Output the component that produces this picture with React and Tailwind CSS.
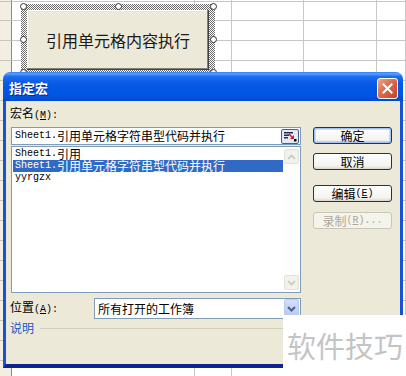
import React from "react";

const cjk = "font-['Noto_Sans_CJK_SC',sans-serif]";
const lat = "font-['Liberation_Mono','Noto_Sans_CJK_SC',monospace] text-[10px]";

const cols = ["w-[183px]", "w-[37px]", "w-[72px]", "w-[73px]", "flex-1"];
const rows = ["h-[2px]", "h-[19px]", ...Array(18).fill("h-[20px]")];

const Sheet = () => (
    <div className="flex flex-col">
        {rows.map((h, i) => (
            <div key={i} className={`flex shrink-0 ${h}`}>
                <div className="w-[12px] shrink-0 bg-[#f1efe2] border-r border-b border-r-[#8e8b7c] border-b-[#cac6b5]" />
                {cols.map((c, j) => (
                    <div key={j} className={`${c} shrink-0 border-r border-b border-[#c6c6c6]`} />
                ))}
            </div>
        ))}
    </div>
);

const Handle = ({ className }) => (
    <div className={`absolute w-[7px] h-[7px] rounded-full bg-white border border-[#333] ${className}`} />
);

const SheetButton = () => (
    <div className="absolute left-[21px] top-[4px] w-[194px] h-[72px] p-[6px] bg-[repeating-conic-gradient(#6b6b6b_0_25%,#ffffff_0_50%)] bg-[length:2px_2px]">
        <div className={`h-full flex items-center justify-center bg-[#ece9d8] shadow-[inset_-1px_-1px_0_#404040,inset_-2px_-2px_0_#808080,inset_1px_1px_0_#ffffff] text-[16px] text-[#1a1a1a] ${cjk}`}>
            引用单元格内容执行
        </div>
        <Handle className="left-[-1px] top-[-1px]" />
        <Handle className="left-[94px] top-[-1px]" />
        <Handle className="left-[189px] top-[-1px]" />
        <Handle className="left-[-1px] top-[32px]" />
        <Handle className="left-[189px] top-[32px]" />
        <Handle className="left-[-1px] top-[65px]" />
        <Handle className="left-[189px] top-[65px]" />
    </div>
);

const CloseButton = () => (
    <div className="w-[21px] h-[21px] rounded-[3px] border border-white bg-[linear-gradient(135deg,#f0a58c_0%,#e0704f_40%,#c8401f_100%)] flex items-center justify-center">
        <svg width="11" height="11" viewBox="0 0 11 11">
            <path d="M1.5 1.5 L9.5 9.5 M9.5 1.5 L1.5 9.5" stroke="#fff" strokeWidth="2" strokeLinecap="square" />
        </svg>
    </div>
);

const RefIcon = () => (
    <svg width="18" height="15" viewBox="0 0 18 15" className="absolute right-px top-[1px]">
        <rect x="0.5" y="0.5" width="17" height="14" rx="1.5" fill="#e4eaf4" stroke="#4b5d86" />
        <rect x="3" y="3" width="9" height="1.5" fill="#1d2b5e" />
        <rect x="3" y="5.5" width="5" height="1.5" fill="#1d2b5e" />
        <rect x="3" y="8" width="4" height="1.5" fill="#1d2b5e" />
        <path d="M8 5 L12 9" stroke="#d21f1f" strokeWidth="1.6" />
        <path d="M9 10 L13 10 L13 6 Z" fill="#d21f1f" />
        <rect x="13" y="10" width="2.5" height="2.5" fill="#000" />
    </svg>
);

const XPButton = ({ children, def, disabled, className = "" }) => (
    <div
        className={`h-[17px] w-[79px] rounded-[3px] border flex items-center justify-center text-[12px] leading-none ${className} ${
            disabled
                ? "border-[#c9c7ba] bg-[#f5f4ea] text-[#aca899]"
                : "border-[#003c74] bg-[linear-gradient(to_bottom,#ffffff,#f3f3ee_80%,#d9d4c9)] text-black"
        } ${def ? "shadow-[inset_0_0_0_1.5px_#a4c0ef]" : ""}`}
    >
        {children}
    </div>
);

const ScrollArrow = ({ up }) => (
    <div className="h-[15px] rounded-[2px] bg-[#f2f2ed] border border-[#e3e2da] flex items-center justify-center">
        <svg width="9" height="6" viewBox="0 0 9 6">
            <path d={up ? "M1 5 L4.5 1.5 L8 5" : "M1 1 L4.5 4.5 L8 1"} stroke="#c9c7ba" strokeWidth="1.6" fill="none" />
        </svg>
    </div>
);

const Dialog = () => (
    <div className={`absolute left-[3px] top-[72px] w-[400px] h-[296px] flex flex-col rounded-t-[7px] overflow-hidden ${cjk}`}>
        <div className="h-[29px] shrink-0 flex items-start justify-between pl-[6px] pr-[5px] bg-[linear-gradient(to_bottom,#2d7cf6_0%,#5aa0fd_6%,#1d6cf0_16%,#0759e6_40%,#0055e3_80%,#0049cc_100%)]">
            <span className="mt-[8px] text-[13px] leading-[16px] font-bold text-white [text-shadow:1px_1px_0_#0a2a8a]">指定宏</span>
            <div className="mt-[6px]"><CloseButton /></div>
        </div>
        <div className="flex-1 flex bg-[#ece9d8] border-x-[3px] border-b-[4px] border-x-[#1a52d6] border-b-[#0c2690] text-[12px] text-black">
            <div className="ml-[5px] w-[290px] flex flex-col">
                <div className="mt-[6px] -ml-px leading-[12px]">
                    宏名<span className={lat}>(<span className="underline">M</span>):</span>
                </div>
                <div className="mt-[5px] h-[18px] relative border border-[#7f9db9] bg-white flex items-center pl-[3px] leading-[12px]">
                    <span className={lat}>Sheet1.</span>引用单元格字符串型代码并执行
                    <RefIcon />
                </div>
                <div className="mt-px h-[147px] flex border border-[#7f9db9] bg-white">
                    <div className="flex-1 flex flex-col pt-px leading-[12px]">
                        <div className="h-[12px] mx-px pl-[2px] flex items-center"><span className={lat}>Sheet1.</span>引用</div>
                        <div className="h-[12px] mx-px pl-[2px] flex items-center bg-[#316ac5] text-white"><span className={lat}>Sheet1.</span>引用单元格字符串型代码并执行</div>
                        <div className="h-[12px] mx-px pl-[2px] flex items-center"><span className={lat}>yyrgzx</span></div>
                    </div>
                    <div className="w-[15px] mr-px my-[2px] flex flex-col justify-between bg-[#fdfdfb]">
                        <ScrollArrow up />
                        <ScrollArrow />
                    </div>
                </div>
                <div className="mt-[5px] flex items-center">
                    <div className="w-[84px] -ml-px leading-[12px]">位置<span className={lat}>(<span className="underline">A</span>):</span></div>
                    <div className="flex-1 h-[21px] border border-[#7f9db9] bg-white flex items-center justify-between pl-[3px] pr-px">
                        <span>所有打开的工作簿</span>
                        <div className="w-[15px] h-[19px] rounded-[2px] border border-[#b9cbf3] bg-[linear-gradient(to_bottom,#d2def9,#b4c8f4)] flex items-center justify-center">
                            <svg width="9" height="6" viewBox="0 0 9 6">
                                <path d="M1 1 L4.5 4.5 L8 1" stroke="#4d6185" strokeWidth="2" fill="none" />
                            </svg>
                        </div>
                    </div>
                </div>
                <div className="mt-[3px] -ml-px flex items-center gap-[6px] leading-[12px]">
                    <span className="text-[#2158c6]">说明</span>
                    <div className="flex-1 h-px bg-[#d0d0bf]" />
                </div>
            </div>
            <div className="ml-[12px] flex flex-col">
                <XPButton def className="mt-[26px]">确定</XPButton>
                <XPButton className="mt-[9px]">取消</XPButton>
                <XPButton className="mt-[15px]">编辑<span className={lat}>(<span className="underline">E</span>)</span></XPButton>
                <XPButton disabled className="mt-[10px]">录制<span className={lat}>(<span className="underline">R</span>)...</span></XPButton>
            </div>
        </div>
    </div>
);

export default function App() {
    return (
        <div className="relative w-[406px] h-[376px] overflow-hidden bg-white">
            <Sheet />
            <SheetButton />
            <Dialog />
            <div className={`absolute right-0 bottom-0 w-[123px] h-[61px] bg-white pt-[16px] pl-[4px] text-[29px] leading-[29px] text-[#c4c4c4] ${cjk}`}>
                软件技巧
            </div>
        </div>
    );
}
